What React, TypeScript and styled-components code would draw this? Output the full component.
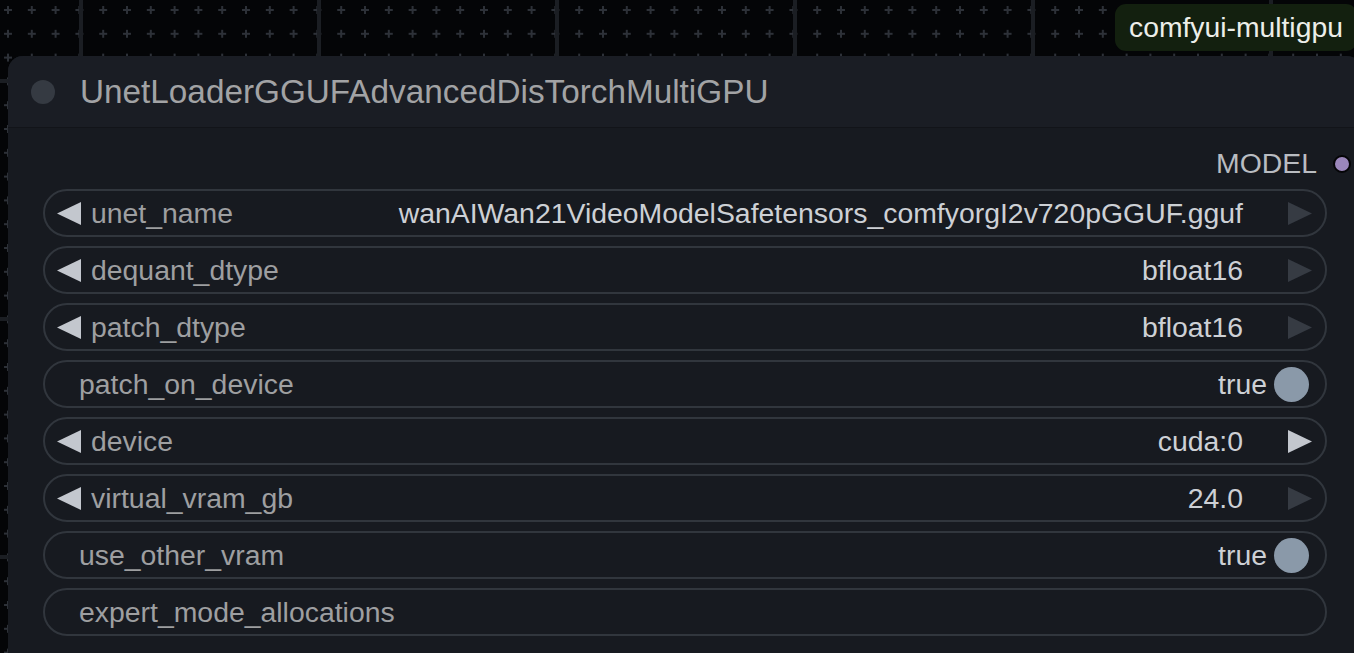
import React from "react";
import styled, { createGlobalStyle } from "styled-components";

const GlobalStyle = createGlobalStyle`
  html, body { margin: 0; padding: 0; background: #040507; }
  body { font-family: "Liberation Sans", Arial, sans-serif; }
  * { box-sizing: border-box; }
`;

const Canvas = styled.div`
  position: relative;
  width: 1354px;
  height: 653px;
  overflow: hidden;
  background: #040507;
`;

const GridLayer = styled.svg`
  position: absolute;
  inset: 0;
  width: 100%;
  height: 100%;
`;

const Badge = styled.div`
  position: absolute;
  top: 4px;
  left: 1115px;
  height: 47px;
  padding: 0 14px;
  display: flex;
  align-items: center;
  background: #13200f;
  border-radius: 11px;
  color: #eceee9;
  font-size: 28.3px;
  white-space: nowrap;
  z-index: 2;
`;

const Node = styled.div`
  position: absolute;
  top: 56px;
  left: 8px;
  width: 1354px;
  height: 640px;
  background: #171a20;
  border-radius: 15px 15px 0 0;
  display: flex;
  flex-direction: column;
  z-index: 1;
`;

const Header = styled.div`
  height: 72px;
  flex: none;
  display: flex;
  align-items: center;
  gap: 25px;
  padding-left: 23px;
  background: #1a1d24;
  border-bottom: 1px solid #121419;
  border-radius: 15px 15px 0 0;
`;

const StatusDot = styled.div`
  width: 24px;
  height: 24px;
  border-radius: 50%;
  background: #353a42;
`;

const Title = styled.div`
  font-size: 33.3px;
  color: #a2a3a5;
  white-space: nowrap;
`;

const Body = styled.div`
  display: flex;
  flex-direction: column;
  gap: 9px;
  padding: 0 35px;
`;

const OutputRow = styled.div`
  height: 61px;
  padding-top: 10px;
  margin-bottom: -9px;
  display: flex;
  align-items: center;
  justify-content: flex-end;
  gap: 16px;
  margin-right: -24px;
`;

const OutputLabel = styled.div`
  font-size: 28.4px;
  color: #b9bcc1;
`;

const OutputSlot = styled.div`
  width: 18px;
  height: 18px;
  border-radius: 50%;
  background: #9b87bb;
  border: 2px solid #050507;
`;

const Widget = styled.div<{ $arrows: boolean }>`
  height: 48px;
  border: 2px solid #31363d;
  border-radius: 24px;
  display: flex;
  align-items: center;
  padding-left: ${(p) => (p.$arrows ? "12px" : "34px")};
  padding-right: 13px;
  font-size: 28.4px;
  white-space: nowrap;
`;

const Label = styled.span<{ $arrows: boolean }>`
  color: #9e9fa1;
  margin-left: ${(p) => (p.$arrows ? "10px" : "0")};
  flex: none;
`;

const Value = styled.span`
  margin-left: auto;
  color: #cdd0d5;
`;

const ArrowIcon = styled.svg`
  width: 24px;
  height: 23px;
  flex: none;
`;

const RightArrowWrap = styled.span`
  margin-left: 45px;
  display: flex;
`;

const Toggle = styled.div`
  width: 35px;
  height: 35px;
  border-radius: 50%;
  background: #8a99a9;
  margin-left: 7px;
  margin-right: 3px;
  flex: none;
`;

const Arrow = ({ dir, color }: { dir: "left" | "right"; color: string }) => (
  <ArrowIcon viewBox="0 0 24 23">
    {dir === "left" ? (
      <polygon points="0,11.5 24,0 24,23" fill={color} />
    ) : (
      <polygon points="0,0 24,11.5 0,23" fill={color} />
    )}
  </ArrowIcon>
);

type W =
  | { kind: "combo"; label: string; value: string; rightActive?: boolean }
  | { kind: "toggle"; label: string; value: string }
  | { kind: "text"; label: string };

const widgets: W[] = [
  { kind: "combo", label: "unet_name", value: "wanAIWan21VideoModelSafetensors_comfyorgI2v720pGGUF.gguf" },
  { kind: "combo", label: "dequant_dtype", value: "bfloat16" },
  { kind: "combo", label: "patch_dtype", value: "bfloat16" },
  { kind: "toggle", label: "patch_on_device", value: "true" },
  { kind: "combo", label: "device", value: "cuda:0", rightActive: true },
  { kind: "combo", label: "virtual_vram_gb", value: "24.0" },
  { kind: "toggle", label: "use_other_vram", value: "true" },
  { kind: "text", label: "expert_mode_allocations" },
];

const STEP = 23.8;

const Grid = () => {
  const majors = [81, 319, 557, 795, 1033, 1271];
  return (
    <GridLayer shapeRendering="crispEdges">
      <defs>
        <pattern
          id="plus"
          patternUnits="userSpaceOnUse"
          width={STEP}
          height={STEP}
          x={8 - STEP / 2}
          y={10 - STEP / 2}
        >
          <rect x={STEP / 2 - 3.5} y={STEP / 2 - 1} width="7" height="2" fill="#2d3138" />
          <rect x={STEP / 2 - 1} y={STEP / 2 - 3.5} width="2" height="7" fill="#2d3138" />
        </pattern>
      </defs>
      <rect width="100%" height="100%" fill="url(#plus)" />
      {majors.map((x) => (
        <rect key={"v" + x} x={x - 2.3} y={0} width={4.6} height={653} fill="#1b1e23" />
      ))}
      {[81, 319, 557].map((y) => (
        <rect key={"h" + y} x={0} y={y - 2.3} width={1354} height={4.6} fill="#1b1e23" />
      ))}
    </GridLayer>
  );
};

export default function App() {
  return (
    <>
      <GlobalStyle />
      <Canvas>
        <Grid />
        <Badge>comfyui-multigpu</Badge>
        <Node>
          <Header>
            <StatusDot />
            <Title>UnetLoaderGGUFAdvancedDisTorchMultiGPU</Title>
          </Header>
          <Body>
            <OutputRow>
              <OutputLabel>MODEL</OutputLabel>
              <OutputSlot />
            </OutputRow>
            {widgets.map((w) => {
              const arrows = w.kind === "combo";
              return (
                <Widget key={w.label} $arrows={arrows}>
                  {arrows && <Arrow dir="left" color="#c3c7ce" />}
                  <Label $arrows={arrows}>{w.label}</Label>
                  {w.kind === "combo" && (
                    <>
                      <Value>{w.value}</Value>
                      <RightArrowWrap>
                        <Arrow dir="right" color={w.rightActive ? "#c3c7ce" : "#363b43"} />
                      </RightArrowWrap>
                    </>
                  )}
                  {w.kind === "toggle" && (
                    <>
                      <Value>{w.value}</Value>
                      <Toggle />
                    </>
                  )}
                </Widget>
              );
            })}
          </Body>
        </Node>
      </Canvas>
    </>
  );
}
